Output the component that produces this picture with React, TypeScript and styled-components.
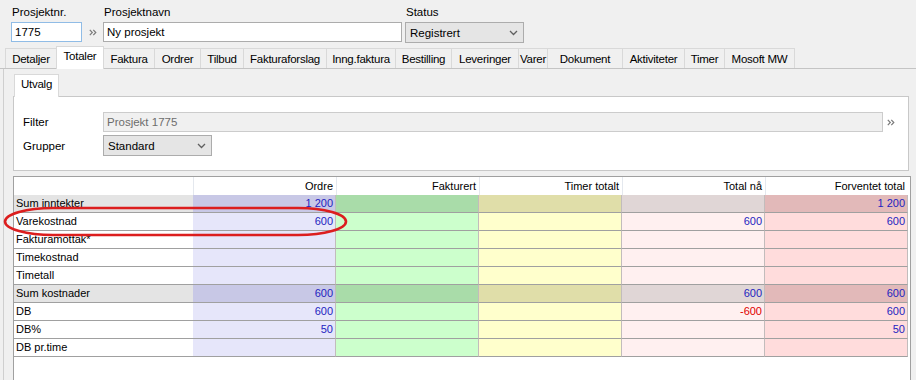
import styled, { createGlobalStyle } from "styled-components";

const GlobalStyle = createGlobalStyle`
  html, body {
    margin: 0;
    padding: 0;
    background: #f0f0f0;
  }
`;

type RowKind = "normal" | "sum";

interface GridRow {
  label: string;
  kind: RowKind;
  values: (string | null)[];
  negative?: boolean[];
}

const TABS = [
  { label: "Detaljer", width: 52 },
  { label: "Totaler", width: 48, active: true },
  { label: "Faktura", width: 52 },
  { label: "Ordrer", width: 47 },
  { label: "Tilbud", width: 44 },
  { label: "Fakturaforslag", width: 84 },
  { label: "Inng.faktura", width: 70 },
  { label: "Bestilling", width: 57 },
  { label: "Leveringer", width: 68 },
  { label: "Varer", width: 30 },
  { label: "Dokument", width: 76 },
  { label: "Aktiviteter", width: 63 },
  { label: "Timer", width: 41 },
  { label: "Mosoft MW", width: 71 },
];

const COLUMNS = ["Ordre", "Fakturert", "Timer totalt", "Total nå", "Forventet total"];

const COLORS: Record<RowKind, string[]> = {
  normal: ["#e6e6fa", "#ccffcc", "#ffffcc", "#fff0f0", "#ffdcdc"],
  sum: ["#c8c8e6", "#a9dca9", "#e0dea9", "#e0d6d6", "#e2b9b9"],
};

const ROWS: GridRow[] = [
  { label: "Sum inntekter", kind: "sum", values: ["1 200", null, null, null, "1 200"] },
  { label: "Varekostnad", kind: "normal", values: ["600", null, null, "600", "600"] },
  { label: "Fakturamottak*", kind: "normal", values: [null, null, null, null, null] },
  { label: "Timekostnad", kind: "normal", values: [null, null, null, null, null] },
  { label: "Timetall", kind: "normal", values: [null, null, null, null, null] },
  { label: "Sum kostnader", kind: "sum", values: ["600", null, null, "600", "600"] },
  {
    label: "DB",
    kind: "normal",
    values: ["600", null, null, "-600", "600"],
    negative: [false, false, false, true, false],
  },
  { label: "DB%", kind: "normal", values: ["50", null, null, null, "50"] },
  { label: "DB pr.time", kind: "normal", values: [null, null, null, null, null] },
];

const Window = styled.div`
  position: relative;
  width: 916px;
  height: 380px;
  overflow: hidden;
  display: flex;
  flex-direction: column;
  background: #f0f0f0;
  font-family: "Liberation Sans", Arial, sans-serif;
  font-size: 11.5px;
  color: #000;
`;

const TopBar = styled.div`
  display: flex;
  align-items: flex-start;
  height: 46px;
  padding: 4px 0 0 11px;
  box-sizing: border-box;
`;

const Field = styled.div`
  display: flex;
  flex-direction: column;
`;

const FieldLabel = styled.label`
  height: 18px;
  line-height: 16px;
  padding-left: 1px;
`;

const TextBox = styled.div<{ $width: number; $focused?: boolean }>`
  width: ${(p) => p.$width}px;
  height: 20px;
  box-sizing: border-box;
  border: 1px solid ${(p) => (p.$focused ? "#90bce6" : "#acacac")};
  background: #fff;
  padding: 0 3px;
  line-height: 18px;
`;

const ComboBox = styled.div<{ $width: number }>`
  width: ${(p) => p.$width}px;
  height: 21px;
  box-sizing: border-box;
  border: 1px solid #acacac;
  background: #e5e5e5;
  padding: 0 5px 0 4px;
  display: flex;
  align-items: center;
  justify-content: space-between;
`;

const LinkArrows = styled.span<{ $width: number }>`
  width: ${(p) => p.$width}px;
  display: flex;
  justify-content: center;
  align-items: center;
  height: 20px;
`;

const Gap = styled.div<{ $width: number }>`
  width: ${(p) => p.$width}px;
`;

const TabStrip = styled.div`
  display: flex;
  align-items: flex-end;
  height: 22px;
  padding-left: 5px;
  border-bottom: 1px solid #c4c4c4;
`;

const Tab = styled.div<{ $width: number; $active?: boolean }>`
  width: ${(p) => p.$width}px;
  height: ${(p) => (p.$active ? 23 : 20)}px;
  margin-bottom: ${(p) => (p.$active ? -1 : 0)}px;
  margin-right: -1px;
  box-sizing: border-box;
  border: 1px solid #d9d9d9;
  border-bottom: none;
  background: ${(p) => (p.$active ? "#fff" : "#f0f0f0")};
  display: flex;
  justify-content: center;
  align-items: ${(p) => (p.$active ? "flex-start" : "center")};
  padding-top: ${(p) => (p.$active ? 3 : 0)}px;
  z-index: ${(p) => (p.$active ? 1 : 0)};
  white-space: nowrap;
  letter-spacing: -0.25px;
`;

const TabPage = styled.div`
  flex: 1;
  margin-left: 3px;
  width: 910px;
  border-left: 1px solid #cfcfcf;
  padding: 7px 0 0 9px;
  display: flex;
  flex-direction: column;
`;

const InnerStrip = styled.div`
  display: flex;
  align-items: flex-end;
  height: 20px;
  padding-left: 1px;
`;

const InnerPage = styled.div`
  width: 896px;
  height: 75px;
  box-sizing: border-box;
  border: 1px solid #c8c8c8;
  background: #fff;
  padding: 15px 0 0 9px;
  display: flex;
  flex-direction: column;
  gap: 3px;
`;

const FormRow = styled.div`
  display: flex;
  align-items: center;
`;

const FormLabel = styled.span`
  width: 80px;
`;

const DisabledBox = styled.div<{ $width: number }>`
  width: ${(p) => p.$width}px;
  height: 20px;
  box-sizing: border-box;
  border: 1px solid #cccccc;
  background: #f0f0f0;
  color: #6d6d6d;
  padding: 0 3px;
  line-height: 18px;
`;

const GridBox = styled.div`
  margin-top: 5px;
  width: 898px;
  flex: 1;
  box-sizing: border-box;
  border: 1px solid #a0a0a0;
  border-bottom: none;
  background: #fff;
  font-size: 11px;
`;

const GridLine = styled.div`
  display: grid;
  grid-template-columns: 179px repeat(5, 143px);
`;

const HeaderCell = styled.div<{ $first?: boolean }>`
  height: 18px;
  line-height: 18px;
  text-align: right;
  padding-right: 3px;
  border-left: ${(p) => (p.$first ? "none" : "1px solid #e4e8ee")};
`;

const LabelCell = styled.div<{ $kind: RowKind }>`
  height: 18px;
  box-sizing: border-box;
  line-height: 17px;
  padding-left: 2px;
  border-bottom: 1px solid #a0a0a0;
  background: ${(p) => (p.$kind === "sum" ? "#e4e4e4" : "#fff")};
  white-space: nowrap;
`;

const ValueCell = styled.div<{ $bg: string; $negative?: boolean }>`
  height: 18px;
  box-sizing: border-box;
  line-height: 17px;
  text-align: right;
  padding-right: 2px;
  border-bottom: 1px solid #a0a0a0;
  border-right: 1px solid #c2bcbc;
  background: ${(p) => p.$bg};
  color: ${(p) => (p.$negative ? "#e00000" : "#1e1ec0")};
`;

const Marker = styled.svg`
  position: absolute;
  left: 3px;
  top: 206px;
  pointer-events: none;
`;

const Chevron = () => (
  <svg width="9" height="6" viewBox="0 0 9 6">
    <polyline points="1,1 4.5,4.5 8,1" fill="none" stroke="#606060" strokeWidth="1.3" />
  </svg>
);

const DoubleArrow = () => (
  <svg width="8" height="7" viewBox="0 0 8 7">
    <polyline points="0.8,0.8 3.3,3.5 0.8,6.2" fill="none" stroke="#7a7a7a" strokeWidth="1.2" />
    <polyline points="4.3,0.8 6.8,3.5 4.3,6.2" fill="none" stroke="#7a7a7a" strokeWidth="1.2" />
  </svg>
);

export default function App() {
  return (
    <Window>
      <GlobalStyle />
      <TopBar>
        <Field>
          <FieldLabel>Prosjektnr.</FieldLabel>
          <TextBox $width={71} $focused>
            1775
          </TextBox>
        </Field>
        <Field>
          <FieldLabel />
          <LinkArrows $width={21}>
            <DoubleArrow />
          </LinkArrows>
        </Field>
        <Field>
          <FieldLabel>Prosjektnavn</FieldLabel>
          <TextBox $width={299}>Ny prosjekt</TextBox>
        </Field>
        <Gap $width={3} />
        <Field>
          <FieldLabel>Status</FieldLabel>
          <ComboBox $width={119}>
            Registrert
            <Chevron />
          </ComboBox>
        </Field>
      </TopBar>

      <TabStrip>
        {TABS.map((t) => (
          <Tab key={t.label} $width={t.width} $active={t.active}>
            {t.label}
          </Tab>
        ))}
      </TabStrip>

      <TabPage>
        <InnerStrip>
          <Tab $width={45} $active>
            Utvalg
          </Tab>
        </InnerStrip>
        <InnerPage>
          <FormRow>
            <FormLabel>Filter</FormLabel>
            <DisabledBox $width={780}>Prosjekt 1775</DisabledBox>
            <LinkArrows $width={16}>
              <DoubleArrow />
            </LinkArrows>
          </FormRow>
          <FormRow>
            <FormLabel>Grupper</FormLabel>
            <ComboBox $width={109}>
              Standard
              <Chevron />
            </ComboBox>
          </FormRow>
        </InnerPage>

        <GridBox>
          <GridLine>
            <HeaderCell $first />
            {COLUMNS.map((c) => (
              <HeaderCell key={c}>{c}</HeaderCell>
            ))}
          </GridLine>
          {ROWS.map((r) => (
            <GridLine key={r.label}>
              <LabelCell $kind={r.kind}>{r.label}</LabelCell>
              {r.values.map((v, i) => (
                <ValueCell key={i} $bg={COLORS[r.kind][i]} $negative={r.negative?.[i]}>
                  {v}
                </ValueCell>
              ))}
            </GridLine>
          ))}
        </GridBox>
      </TabPage>

      <Marker width="348" height="32" viewBox="0 0 348 32">
        <rect x="2" y="2" width="341" height="27" rx="48" ry="13.5" fill="none" stroke="#dc1e1e" strokeWidth="2.6" />
      </Marker>
    </Window>
  );
}
